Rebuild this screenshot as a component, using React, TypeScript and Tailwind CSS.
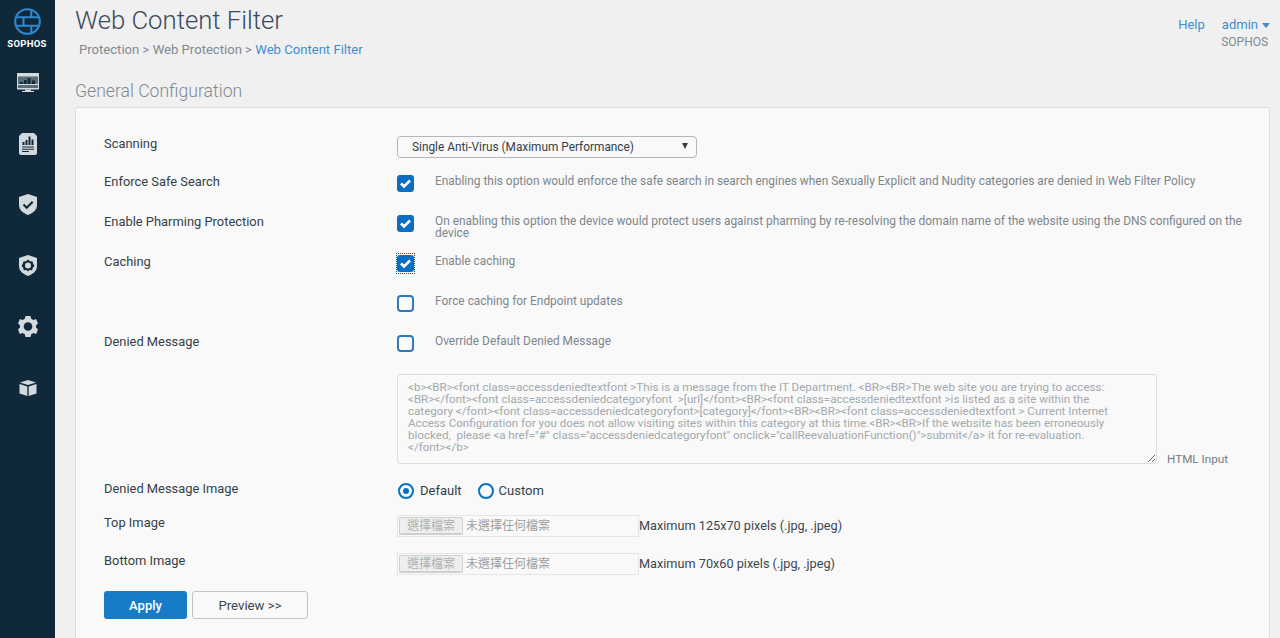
import React from "react";

const F = "[font-family:Roboto,'Noto_Sans_CJK_TC',sans-serif]";

function Logo() {
  return (
    <svg className="-ml-[1px]" width="27" height="27" viewBox="0 0 27 27" fill="none" stroke="#2f86cc" strokeWidth="2.100">
      <circle cx="13.500" cy="13.500" r="12.300" />
      <path d="M2.500 9.300h22M2.500 17.700h22M9.500 9.300v8.400M17.300 1.500v7.800M17.300 17.700v7.800" />
    </svg>
  );
}

const iconFill = "#d3dadd";

function Monitor() {
  return (
    <svg width="22" height="20" viewBox="0 0 22 20">
      <rect x="0" y="0" width="22" height="16.500" fill={iconFill} />
      <rect x="1" y="3.500" width="20" height="7.500" fill="#5c6b74" />
      <path d="M3 9h3v2H3zM7 7h2.500v4H7zM10.500 5h3v6h-3zM15 7.500h3V11h-3z" fill="#0f2a3b" />
      <rect x="1" y="11" width="20" height="1" fill={iconFill} />
      <rect x="1" y="12" width="20" height="3" fill="#5c6b74" />
      <path d="M8 16.500h6V18h3v1H5v-1h3z" fill={iconFill} />
    </svg>
  );
}

function Report() {
  return (
    <svg width="18" height="22" viewBox="0 0 18 22">
      <path d="M3 0h12l3 3v17a2 2 0 0 1-2 2H2a2 2 0 0 1-2-2V3z" fill={iconFill} />
      <path d="M3.500 9H5.500v3H3.500zM6.500 7H8.500v5H6.500zM9.500 3.500H11.500V12H9.500zM12.500 6.500H14.500V12H12.500z" fill="#10293a" />
      <path d="M3 13.500h12v1H3zM3 15.800h12v1H3zM3 18h7v1H3z" fill="#10293a" />
    </svg>
  );
}

function Shield() {
  return (
    <svg width="18" height="21" viewBox="0 0 18 21">
      <path d="M9 0l9 3v8c0 5-4 8-9 10-5-2-9-5-9-10V3z" fill={iconFill} />
      <path d="M4.500 10.500l3.200 3.200 6-6" fill="none" stroke="#10293a" strokeWidth="2.200" />
    </svg>
  );
}

function ShieldGear() {
  return (
    <svg width="18" height="21" viewBox="0 0 18 21">
      <path d="M9 0l9 3v8c0 5-4 8-9 10-5-2-9-5-9-10V3z" fill={iconFill} />
      <path d="M9 4.500l2 1.700 2.500.2.800 2.500L15.500 11l-1.800 1.800-.5 2.500-2.700-.2L9 16.500l-1.700-1.400-2.600.2-.5-2.500L2.500 11l1.200-2.100.8-2.500L7 6.200z" fill="#10293a" />
      <circle cx="9" cy="10.500" r="3" fill={iconFill} />
    </svg>
  );
}

function Gear() {
  return (
    <svg width="20" height="21" viewBox="0 0 20 21">
      <path d="M7.500 0h5l.7 2.700 2.200 1.200 2.700-.8L20 7.500l-2 2v2l2 2-1.900 4.400-2.700-.8-2.200 1.200-.7 2.700h-5l-.7-2.700-2.200-1.200-2.700.8L0 13.500l2-2v-2l-2-2 1.900-4.400 2.700.8 2.200-1.200z" fill={iconFill} />
      <circle cx="10" cy="10.500" r="4.300" fill="#10293a" />
    </svg>
  );
}

function Box() {
  return (
    <svg width="18" height="16" viewBox="0 0 18 16">
      <path d="M9 0l8 2.500L9 5 1 2.500z" fill={iconFill} />
      <path d="M0.500 4L8.300 6.400V16L0.500 13.500z" fill={iconFill} />
      <path d="M17.500 4L9.700 6.400V16l7.800-2.500z" fill={iconFill} />
    </svg>
  );
}

function Check({ on, focus }: { on?: boolean; focus?: boolean }) {
  return (
    <span className={`relative block w-[17px] h-[17px] rounded-[3px] ${on ? "bg-[#0a6fc2]" : "border-2 border-[#2f79bd] rounded-[4px] w-[16px] h-[16px] bg-[#fafafa]"}`}>
      {focus && <span className="absolute -left-[1px] -right-[1px] -top-[2px] -bottom-[2px] border border-dotted border-[#0a4f96]" />}
      {on && (
        <svg className="absolute left-[3px] top-[4px]" width="11" height="9" viewBox="0 0 11 9" fill="none" stroke="#fff" strokeWidth="2.600">
          <path d="M1 4.500l3 3 6-6" />
        </svg>
      )}
    </span>
  );
}

function Radio({ on }: { on?: boolean }) {
  return (
    <span className="flex items-center justify-center w-4 h-4 rounded-full border-2 border-[#0a6fc2] bg-[#fafafa]">
      {on && <span className="block w-[6px] h-[6px] rounded-full bg-[#0a6fc2]" />}
    </span>
  );
}

function Row({ label, h, children }: { label?: string; h: string; children: React.ReactNode }) {
  return (
    <div className={`flex ${h}`}>
      <div className="w-[293px] shrink-0 text-[12.900px] leading-[16px] text-[#333f48]">{label}</div>
      <div className="flex-1 min-w-0">{children}</div>
    </div>
  );
}

function CheckRow({ label, text, on, focus }: { label?: string; text: string; on?: boolean; focus?: boolean }) {
  return (
    <Row label={label} h="h-[40px]">
      <div className="flex">
        <div className="w-[38px] shrink-0 pt-[1px]">
          <Check on={on} focus={focus} />
        </div>
        <p className="text-[11.900px] leading-[12px] text-[#7d868c] pr-[25px] pt-[1px]">{text}</p>
      </div>
    </Row>
  );
}

function FileRow({ label, hint, h }: { label: string; hint: string; h: string }) {
  return (
    <Row label={label} h={h}>
      <div className="flex items-center">
        <div className="flex items-center w-[242px] h-[22px] border border-[#e6e6e6] pl-[1px]">
          <span className="flex items-center justify-center w-[64px] h-[18px] bg-[#eeeeee] border border-[#cfcfcf] border-b-2 rounded-[2px] text-[12px] text-[#b0b0b0]">選擇檔案</span>
          <span className="ml-[3px] text-[12px] text-[#a0a0a0]">未選擇任何檔案</span>
        </div>
        <span className="text-[12.700px] text-[#3c4650]">{hint}</span>
      </div>
    </Row>
  );
}

const message = `<b><BR><font class=accessdeniedtextfont >This is a message from the IT Department. <BR><BR>The web site you are trying to access:
<BR></font><font class=accessdeniedcategoryfont  >[url]</font><BR><font class=accessdeniedtextfont >is listed as a site within the
category </font><font class=accessdeniedcategoryfont>[category]</font><BR><BR><font class=accessdeniedtextfont > Current Internet
Access Configuration for you does not allow visiting sites within this category at this time.<BR><BR>If the website has been erroneously
blocked,  please <a href="#" class="accessdeniedcategoryfont" onclick="callReevaluationFunction()">submit</a> it for re-evaluation.
</font></b>`;

export default function App() {
  const nav = [<Monitor />, <Report />, <Shield />, <ShieldGear />, <Gear />, <Box />];
  return (
    <div className={`flex h-[638px] overflow-hidden bg-[#f0f0f0] ${F}`}>
      <aside className="w-[55px] shrink-0 bg-[#10293a] flex flex-col items-center pt-[8px]">
        <Logo />
        <span className="mt-[3px] -ml-[1px] text-[9.500px] leading-[11px] font-bold tracking-[0.3px] text-white">SOPHOS</span>
        <div className="mt-[3px] flex flex-col items-center">
          {nav.map((n, i) => (
            <div key={i} className="h-[61px] flex items-center justify-center">{n}</div>
          ))}
        </div>
      </aside>
      <main className="flex-1 min-w-0 pl-[20px] pr-[10px]">
        <header className="flex justify-between h-[78px]">
          <div>
            <h1 className="pt-[4px] text-[25.700px] leading-[32px] font-light text-[#3b4a5a]">Web Content Filter</h1>
            <div className="mt-[6px] pl-[4px] text-[13.100px] leading-[16px] text-[#7f8a93]">
              Protection &gt; Web Protection &gt; <span className="text-[#3d8fd1]">Web Content Filter</span>
            </div>
          </div>
          <div className="pt-[17px] text-[13px] leading-[16px]">
            <div className="flex text-[#3d8fd1]">
              <span>Help</span>
              <span className="ml-[17px]">admin</span>
              <svg className="ml-[4px] mt-[6px]" width="8" height="5" viewBox="0 0 8 5"><path d="M0 0h8L4 5z" fill="#3d8fd1" /></svg>
            </div>
            <div className="mt-[1px] pl-[43px] text-[12px] text-[#7f8a93]">SOPHOS</div>
          </div>
        </header>
        <h2 className="text-[17.600px] leading-[26px] font-light text-[#7f8a93]">General Configuration</h2>
        <section className="mt-[3px] h-[540px] bg-[#f9f9f9] border border-[#dddddd] rounded-t-[3px] pl-[28px] pt-[28px]">
          <Row label="Scanning" h="h-[38px]">
            <div className="relative w-[300px] h-[22px] border border-[#b4b8bb] rounded-[4px] flex items-center pl-[14px] pt-[2px] text-[11.850px] text-[#333f48]">
              Single Anti-Virus (Maximum Performance)
              <svg className="absolute right-[8px] top-[6px]" width="6" height="6" viewBox="0 0 6 6"><path d="M0 0h6L3 6z" fill="#333f48" /></svg>
            </div>
          </Row>
          <CheckRow label="Enforce Safe Search" on text="Enabling this option would enforce the safe search in search engines when Sexually Explicit and Nudity categories are denied in Web Filter Policy" />
          <CheckRow label="Enable Pharming Protection" on text="On enabling this option the device would protect users against pharming by re-resolving the domain name of the website using the DNS configured on the device" />
          <CheckRow label="Caching" on focus text="Enable caching" />
          <CheckRow text="Force caching for Endpoint updates" />
          <CheckRow label="Denied Message" text="Override Default Denied Message" />
          <Row h="h-[107px]">
            <div className="flex items-end">
              <textarea
                readOnly
                value={message}
                wrap="off"
                className="w-[760px] h-[90px] border border-[#dddddd] rounded-[3px] bg-[#f9f9f9] px-[10px] pt-[6px] text-[11.600px] leading-[12px] text-[#a3a9ad] overflow-hidden resize outline-none"
              />
              <span className="ml-[10px] -mb-[5px] text-[11.700px] text-[#6f7c85]">HTML Input</span>
            </div>
          </Row>
          <Row label="Denied Message Image" h="h-[34px]">
            <div className="flex items-center pt-[2px] pl-[1px] text-[13px] leading-[16px] text-[#333f48]">
              <Radio on />
              <span className="ml-[6px]">Default</span>
              <span className="ml-[16px]"><Radio /></span>
              <span className="ml-[5px]">Custom</span>
            </div>
          </Row>
          <FileRow label="Top Image" hint="Maximum 125x70 pixels (.jpg, .jpeg)" h="h-[38px]" />
          <FileRow label="Bottom Image" hint="Maximum 70x60 pixels (.jpg, .jpeg)" h="h-[38px]" />
          <div className="flex gap-[5px]">
            <button className="w-[83px] h-[28px] pt-[1px] rounded-[3px] bg-[#167cc8] text-white text-[13px] font-medium">Apply</button>
            <button className="w-[116px] h-[28px] pt-[1px] rounded-[3px] border border-[#c4c4c4] bg-[#f9f9f9] text-[#3c4650] text-[13.200px]">Preview &gt;&gt;</button>
          </div>
        </section>
      </main>
    </div>
  );
}
